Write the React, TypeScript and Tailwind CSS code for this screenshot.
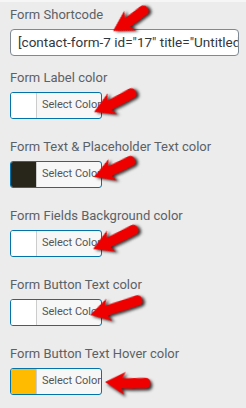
const font = { fontFamily: 'Roboto, "Liberation Sans", sans-serif' };

type Row = { label: string; swatch: string; arrow: { x: number; y: number; angle: number; len: number } };

const rows: Row[] = [
  { label: 'Form Label color', swatch: '#ffffff', arrow: { x: 94, y: 110, angle: -24, len: 45 } },
  { label: 'Form Text & Placeholder Text color', swatch: '#28251b', arrow: { x: 94, y: 175, angle: -21, len: 43 } },
  { label: 'Form Fields Background color', swatch: '#ffffff', arrow: { x: 93, y: 247, angle: -23, len: 48 } },
  { label: 'Form Button Text color', swatch: '#ffffff', arrow: { x: 90, y: 313, angle: -15, len: 53 } },
  { label: 'Form Button Text Hover color', swatch: '#ffbb00', arrow: { x: 105, y: 380, angle: 4, len: 44 } },
];

// red pointer arrow, tip at (x, y), tail goes off to the right then rotated
function Arrow({ x, y, angle, len }: { x: number; y: number; angle: number; len: number }) {
  const t = len;
  return (
    <svg
      className="absolute pointer-events-none overflow-visible"
      width={t + 4}
      height={26}
      viewBox={`0 -13 ${t + 4} 26`}
      style={{
        left: x,
        top: y - 13,
        transform: `rotate(${angle}deg)`,
        transformOrigin: '0 13px',
        filter: 'drop-shadow(2px 2.5px 1.5px rgba(0,0,0,0.8))',
      }}
    >
      <path
        d={`M0 0 L20 -11.5 L17 -5 C26 -5.5 ${t - 10} -6.5 ${t - 4} -7 Q${t + 1.5} -7 ${t + 1.5} -1.5 Q${t + 1.5} 3.5 ${t - 4} 3.5 C${t - 12} 4 26 5 17 5 L20 11.5 Z`}
        fill="#ee0000"
      />
    </svg>
  );
}

function ColorButton({ swatch }: { swatch: string }) {
  return (
    <div className="flex h-[27px] w-[92px] rounded-[3px] border border-[#0073aa] overflow-hidden bg-[#f7f7f7]">
      <div className="w-[28px] h-full border-r border-[#cccccc]" style={{ backgroundColor: swatch }} />
      <div className="flex-1 flex items-center pl-[5px] text-[11px] text-[#555555] whitespace-nowrap">Select Color</div>
    </div>
  );
}

export default function App() {
  return (
    <div className="relative w-[246px] h-[408px] overflow-hidden bg-[#ececec] border-t-2 border-[#f6f6f6]" style={font}>
      <div className="flex flex-col px-[10px] pt-[4px]">
        <div className="h-[18px] leading-[18px] text-[13px] text-[#5b6167]">Form Shortcode</div>
        <div className="mt-[5px] h-[27px] w-[229px] rounded-[4px] border border-[#7e8993] bg-white flex items-center pl-[7px] overflow-hidden whitespace-nowrap text-[13.5px] text-[#32373c]">
          [contact-form-7 id="17" title="Untitled"]
        </div>
        <div className="flex flex-col gap-[19px] mt-[13px]">
          {rows.map((r) => (
            <div key={r.label} className="flex flex-col gap-[5px]">
              <div className="h-[18px] leading-[18px] text-[13px] text-[#5b6167] whitespace-nowrap">{r.label}</div>
              <ColorButton swatch={r.swatch} />
            </div>
          ))}
        </div>
      </div>
      <Arrow x={113} y={29} angle={-31} len={40} />
      {rows.map((r) => (
        <Arrow key={r.label} {...r.arrow} />
      ))}
    </div>
  );
}
